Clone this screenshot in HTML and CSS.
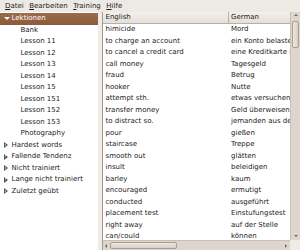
FILE: index.html
```html
<!DOCTYPE html>
<html>
<head>
<meta charset="utf-8">
<link rel="stylesheet" href="styles.css">
</head>
<body>
<div class="window">
  <div class="menubar">
    <span class="mi"><u>D</u>atei</span>
    <span class="mi"><u>B</u>earbeiten</span>
    <span class="mi"><u>T</u>raining</span>
    <span class="mi"><u>H</u>ilfe</span>
  </div>
  <div class="main">
    <div class="tree">
      <div class="row top selected"><span class="exp open"></span>Lektionen</div>
      <div class="row child">Bank</div>
      <div class="row child">Lesson 11</div>
      <div class="row child">Lesson 12</div>
      <div class="row child">Lesson 13</div>
      <div class="row child">Lesson 14</div>
      <div class="row child">Lesson 15</div>
      <div class="row child">Lesson 151</div>
      <div class="row child">Lesson 152</div>
      <div class="row child">Lesson 153</div>
      <div class="row child">Photography</div>
      <div class="row top"><span class="exp closed"></span>Hardest words</div>
      <div class="row top"><span class="exp closed"></span>Fallende Tendenz</div>
      <div class="row top"><span class="exp closed"></span>Nicht trainiert</div>
      <div class="row top"><span class="exp closed"></span>Lange nicht trainiert</div>
      <div class="row top"><span class="exp closed"></span>Zuletzt geübt</div>
    </div>
    <div class="handle"></div>
    <div class="listpane">
      <div class="table">
        <div class="thead">
          <div class="c1">English</div>
          <div class="c2">German</div>
        </div>
        <div class="rows">
          <div class="lr"><div class="c1">himicide</div><div class="c2">Mord</div></div>
          <div class="lr"><div class="c1">to charge an account</div><div class="c2">ein Konto belasten</div></div>
          <div class="lr"><div class="c1">to cancel a credit card</div><div class="c2">eine Kreditkarte sperren</div></div>
          <div class="lr"><div class="c1">call money</div><div class="c2">Tagesgeld</div></div>
          <div class="lr"><div class="c1">fraud</div><div class="c2">Betrug</div></div>
          <div class="lr"><div class="c1">hooker</div><div class="c2">Nutte</div></div>
          <div class="lr"><div class="c1">attempt sth.</div><div class="c2">etwas versuchen</div></div>
          <div class="lr"><div class="c1">transfer money</div><div class="c2">Geld überweisen</div></div>
          <div class="lr"><div class="c1">to distract so.</div><div class="c2">jemanden aus dem Konzept bringen</div></div>
          <div class="lr"><div class="c1">pour</div><div class="c2">gießen</div></div>
          <div class="lr"><div class="c1">staircase</div><div class="c2">Treppe</div></div>
          <div class="lr"><div class="c1">smooth out</div><div class="c2">glätten</div></div>
          <div class="lr"><div class="c1">insult</div><div class="c2">beleidigen</div></div>
          <div class="lr"><div class="c1">barley</div><div class="c2">kaum</div></div>
          <div class="lr"><div class="c1">encouraged</div><div class="c2">ermutigt</div></div>
          <div class="lr"><div class="c1">conducted</div><div class="c2">ausgeführt</div></div>
          <div class="lr"><div class="c1">placement test</div><div class="c2">Einstufungstest</div></div>
          <div class="lr"><div class="c1">right away</div><div class="c2">auf der Stelle</div></div>
          <div class="lr"><div class="c1">can/could</div><div class="c2">können</div></div>
        </div>
      </div>
      <div class="vscroll">
        <div class="arrow up"></div>
        <div class="vtrough"><div class="vthumb"></div></div>
        <div class="arrow down"></div>
      </div>
      <div class="hscroll">
        <div class="arrow left"></div>
        <div class="htrough"><div class="hthumb"></div></div>
        <div class="arrow right"></div>
      </div>
      <div class="corner"></div>
    </div>
  </div>
</div>
</body>
</html>
```

FILE: styles.css
```css
* { box-sizing: border-box; }
html, body {
  margin: 0;
  padding: 0;
  width: 300px;
  height: 250px;
  overflow: hidden;
  background: #efebe7;
}
body {
  font-family: "DejaVu Sans", "Liberation Sans", sans-serif;
  font-size: 7px;
  color: #1c1c1c;
}
.window {
  width: 300px;
  height: 250px;
  display: flex;
  flex-direction: column;
}
.menubar {
  height: 12px;
  display: flex;
  align-items: center;
  gap: 5.5px;
  padding-left: 5px;
  background: #edeae6;
  line-height: 12px;
}
.mi u { text-decoration: underline; text-underline-offset: 1px; }
.main {
  flex: 1;
  display: flex;
  min-height: 0;
}
.tree {
  width: 98px;
  background: #ffffff;
  padding-top: 1px;
  overflow: hidden;
}
.row {
  height: 11.5px;
  line-height: 11.5px;
  white-space: nowrap;
  display: flex;
  align-items: center;
}
.row.top { padding-left: 3px; }
.row.child { padding-left: 20.5px; }
.row.selected {
  background: linear-gradient(#9b6a49, #8c5b3b);
  color: #ffffff;
}
.exp {
  width: 8px;
  height: 8px;
  display: inline-block;
  position: relative;
  margin-right: 0.5px;
  flex: none;
}
.exp.open::before {
  content: "";
  position: absolute;
  left: 0.5px;
  top: 2.5px;
  border-left: 3px solid transparent;
  border-right: 3px solid transparent;
  border-top: 3.5px solid #ffffff;
}
.exp.closed::before {
  content: "";
  position: absolute;
  left: 1px;
  top: 1px;
  border-top: 3px solid transparent;
  border-bottom: 3px solid transparent;
  border-left: 4px solid #555555;
}
.exp.closed::after {
  content: "";
  position: absolute;
  left: 1.8px;
  top: 2.6px;
  border-top: 1.4px solid transparent;
  border-bottom: 1.4px solid transparent;
  border-left: 1.9px solid #ffffff;
}
.handle {
  width: 4px;
  background: #efebe7;
}
.listpane {
  flex: 1;
  display: grid;
  grid-template-columns: 1fr 10px;
  grid-template-rows: 1fr 10px;
  border-left: 1px solid #a39b90;
  background: #efebe7;
  min-width: 0;
  min-height: 0;
}
.table {
  background: #ffffff;
  overflow: hidden;
  min-width: 0;
  min-height: 0;
}
.thead {
  height: 12px;
  display: flex;
  background: linear-gradient(#f3f0ec, #e4dfd8);
  border-bottom: 1px solid #b9b0a4;
  line-height: 11px;
}
.thead .c1 { font-weight: normal; }
.c1 {
  width: 125px;
  padding-left: 2.5px;
  white-space: nowrap;
  overflow: hidden;
  flex: none;
}
.c2 {
  padding-left: 3px;
  white-space: nowrap;
  overflow: hidden;
  flex: 1;
  min-width: 0;
}
.thead .c2 { border-left: 1px solid #b9b0a4; padding-left: 2px; }
.rows { padding-top: 0.25px; }
.lr {
  display: flex;
  height: 11.5px;
  line-height: 11.5px;
}
.vscroll {
  display: flex;
  flex-direction: column;
  background: #dcd6ce;
  border-left: 1px solid #c9c1b6;
}
.vtrough {
  flex: 1;
  padding: 0 1px;
}
.vthumb {
  margin-top: 0px;
  height: 27px;
  background: linear-gradient(90deg, #ece7e0, #d8d0c5);
  border: 1px solid #a89d8f;
  border-radius: 2px;
}
.hscroll {
  display: flex;
  background: #dcd6ce;
  border-top: 1px solid #c9c1b6;
}
.htrough {
  flex: 1;
  padding: 1px 0;
}
.hthumb {
  margin-left: -2px;
  width: 67px;
  height: 100%;
  background: linear-gradient(#ece7e0, #d8d0c5);
  border: 1px solid #a89d8f;
  border-radius: 2px;
}
.arrow {
  flex: none;
  width: 9px;
  height: 9px;
  position: relative;
}
.arrow::before {
  content: "";
  position: absolute;
  border: 2px solid transparent;
}
.arrow.up::before { left: 2.5px; top: 1.5px; border-bottom: 2.5px solid #6e665c; border-top: 0; }
.arrow.down::before { left: 2.5px; top: 4px; border-top: 2.5px solid #6e665c; border-bottom: 0; }
.arrow.left::before { left: 2px; top: 2.5px; border-right: 2.5px solid #6e665c; border-left: 0; }
.arrow.right::before { left: 4px; top: 2.5px; border-left: 2.5px solid #6e665c; border-right: 0; }
.corner {
  background: #efebe7;
}
```
